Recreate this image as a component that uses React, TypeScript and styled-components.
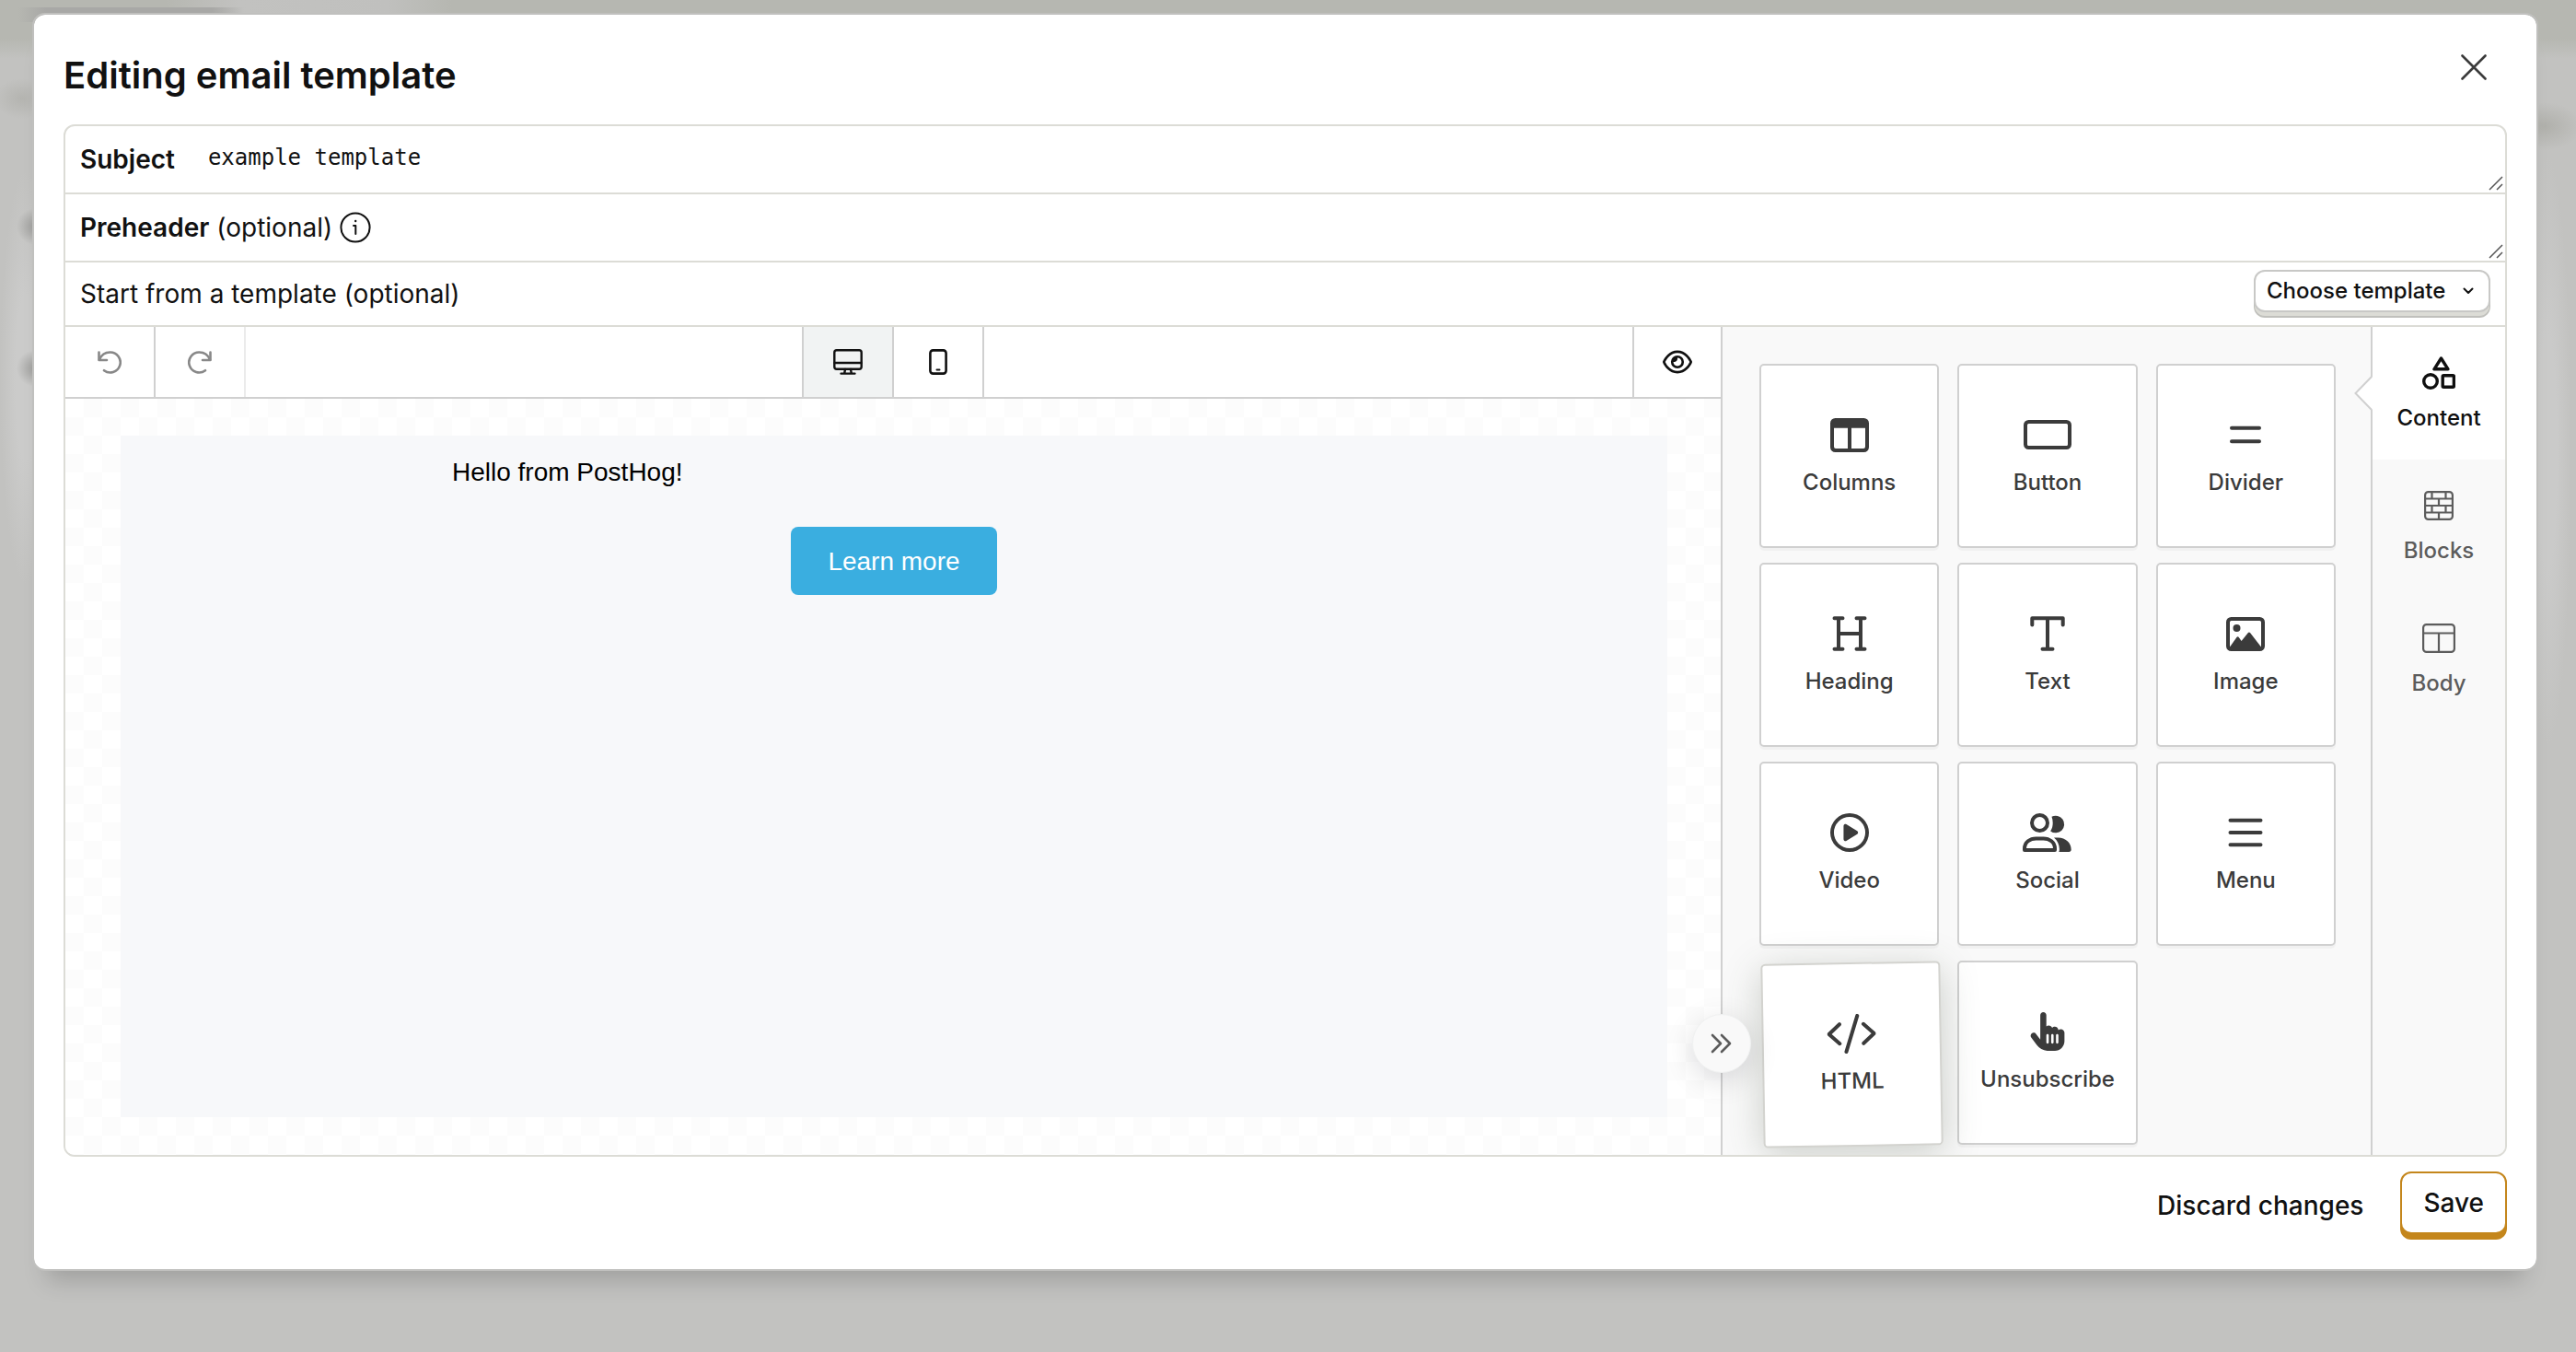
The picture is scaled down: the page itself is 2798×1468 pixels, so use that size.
import React from "react";
import styled, { createGlobalStyle, css } from "styled-components";
import { FaHandPointer, FaRegCirclePlay, FaRegEye } from "react-icons/fa6";

const color = {
  text: "#111111",
  tool: "#3b3b3b",
  muted: "#5c5c5c",
  disabled: "#888888",
  line: "#dcdcd6",
  divider: "#d0d0d0",
  panel: "#f9f9f9",
  email: "#f7f8fa",
  accent: "#c4861c",
  link: "#3aaee0",
};

const Global = createGlobalStyle`
  *, *::before, *::after { box-sizing: border-box; }
  body {
    margin: 0;
    background: #c2c2c0;
    color: ${color.text};
    font-family: Inter, "Liberation Sans", sans-serif;
    font-size: 28px;
    line-height: 40px;
  }
  button, select, textarea { font: inherit; color: inherit; }
`;

/* ---------- page and dialog ---------- */

const Backdrop = styled.div`
  min-height: 100vh;
  padding: 14px 41px 88px 35px;
  background-color: #c2c2c0;
  background-repeat: no-repeat;
  background-image:
    radial-gradient(circle at 38px 246px, #9c9c9a 0, #9c9c9a00 20px),
    radial-gradient(circle at 38px 400px, #9c9c9a 0, #9c9c9a00 20px),
    radial-gradient(ellipse 30px 22px at 24px 107px, #b4b4b0 0, #b4b4b000 100%),
    radial-gradient(ellipse 28px 225px at 28px 410px, #cbcbca 40%, #cbcbca00 100%),
    radial-gradient(ellipse 26px 320px at calc(100% - 31px) 490px, #cacac9 40%, #cacac900 100%),
    radial-gradient(ellipse 40px 26px at calc(100% - 34px) 137px, #b0b0ab 0, #b0b0ab00 100%),
    linear-gradient(90deg, #a8a8a600 20px, #a8a8a6 50px, #a8a8a6 230px, #a8a8a600 265px),
    linear-gradient(180deg, #c2c2c000 65%, #c2c2c0 100%),
    linear-gradient(90deg, #b6b7b1 180px, #c2c2c0 260px, #c0c0be 420px, #b6b7b1 490px);
  background-size: 100% 100%, 100% 100%, 100% 100%, 100% 100%, 100% 100%, 100% 100%, 100% 16px, 100% 64px, 100% 64px;
  background-position: 0 0, 0 0, 0 0, 0 0, 0 0, 0 0, 0 8px, 0 0, 0 0;
`;

const Dialog = styled.main`
  border: 2px solid #c0c0be;
  border-radius: 14px;
  background: #ffffff;
  background-clip: padding-box;
  box-shadow: 0 26px 24px -16px rgba(0, 0, 0, 0.18);
`;

const Header = styled.header`
  display: flex;
  align-items: flex-start;
  justify-content: space-between;
  padding: 33px 44px 20px 32px;
`;

const Title = styled.h1`
  margin: 0;
  font-size: 40px;
  font-weight: 600;
  line-height: 66px;
`;

const PlainButton = styled.button`
  display: flex;
  align-items: center;
  justify-content: center;
  padding: 0;
  border: 0;
  background: transparent;
  cursor: pointer;
`;

const CloseButton = styled(PlainButton)`
  width: 48px;
  height: 48px;
  color: ${color.tool};
`;

const Form = styled.form`
  margin: 0 32px;
  border: 2px solid ${color.line};
  border-radius: 12px;
  overflow: hidden;
`;

/* ---------- form rows ---------- */

const Row = styled.div<{ $compact?: boolean }>`
  position: relative;
  display: flex;
  align-items: center;
  justify-content: space-between;
  gap: 16px;
  height: ${(p) => (p.$compact ? 70 : 74)}px;
  padding-left: 16px;
  padding-right: ${(p) => (p.$compact ? 16 : 0)}px;
  border-bottom: 2px solid ${color.line};
`;

const Label = styled.label`
  display: flex;
  align-items: center;
  gap: 8px;
  white-space: nowrap;
`;

const Strong = styled.strong`
  font-weight: 600;
`;

const Field = styled.textarea`
  flex: 1;
  align-self: stretch;
  display: block;
  padding: 18px 20px;
  border: 0;
  outline: 0;
  resize: none;
  overflow: hidden;
  background: transparent;
  font-family: "DejaVu Sans Mono", monospace;
  font-size: 24px;
  line-height: 32px;
`;

const Grip = styled.svg`
  position: absolute;
  right: 2px;
  bottom: 2px;
  pointer-events: none;
`;

const SelectBox = styled.div`
  display: flex;
  align-items: center;
  width: 257px;
  height: 46px;
  margin-bottom: 6px;
  padding-right: 16px;
  border: 2px solid #c8c8c6;
  border-radius: 12px;
  background: #ffffff;
  box-shadow: 0 5px 0 -1px ${color.line}, 0 6px 0 0 #c0c0bc;
`;

const Select = styled.select`
  flex: 1;
  height: 42px;
  padding: 0 0 0 12px;
  margin-right: -12px;
  appearance: none;
  border: 0;
  outline: 0;
  background: transparent;
  font-size: 24px;
  font-weight: 500;
  line-height: 32px;
`;

/* ---------- editor ---------- */

const Editor = styled.div`
  display: flex;
  align-items: stretch;
`;

const Stage = styled.section`
  flex: 1;
  display: flex;
  flex-direction: column;
`;

const Toolbar = styled.div`
  display: grid;
  grid-template-columns: 1fr auto 1fr;
  height: 78px;
  border-bottom: 2px solid ${color.divider};
`;

const ToolGroup = styled.div<{ $end?: boolean; $line?: boolean }>`
  display: flex;
  justify-content: ${(p) => (p.$end ? "flex-end" : "flex-start")};
  ${(p) => p.$line && css`border-left: 2px solid ${color.divider};`}
`;

const ToolButton = styled(PlainButton)<{ $active?: boolean; $faint?: boolean; $side?: "left" | "right" }>`
  width: ${(p) => (p.$side === "left" ? 96 : 98)}px;
  border-${(p) => p.$side ?? "right"}: 2px solid ${(p) => (p.$faint ? "#ebebeb" : color.divider)};
  background: ${(p) => (p.$active ? "#f1f3f3" : "transparent")};
  &:disabled { color: ${color.disabled}; }
`;

const Canvas = styled.div`
  flex: 1;
  display: flex;
  padding: 40px 58px 41px 60px;
  background: repeating-conic-gradient(#fcfcfc 0 25%, #ffffff 0 50%) 0 0 / 40px 40px;
`;

const Email = styled.article`
  flex: 1;
  background: ${color.email};
  color: #000000;
  font-family: "Liberation Sans", Arial, sans-serif;
  line-height: 39px;
`;

const EmailColumn = styled.div`
  max-width: 1000px;
  margin: 0 auto;
`;

const EmailBlock = styled.div<{ $center?: boolean }>`
  padding: 20px;
  text-align: ${(p) => (p.$center ? "center" : "left")};
`;

const EmailLink = styled.a`
  display: inline-block;
  padding: 18px 40px 17px;
  border-radius: 8px;
  background: ${color.link};
  color: #ffffff;
  text-decoration: none;
`;

const Library = styled.aside`
  position: relative;
  width: 706px;
  padding: 40px 38px 11px 40px;
  border-left: 2px solid ${color.divider};
  background: ${color.panel};
`;

const CardGrid = styled.div`
  display: grid;
  grid-template-columns: repeat(3, 1fr);
  gap: 16px 20px;
`;

const Card = styled(PlainButton)<{ $lifted?: boolean }>`
  flex-direction: column;
  justify-content: flex-start;
  gap: 14px;
  height: 200px;
  padding-top: 53px;
  border: 2px solid ${color.divider};
  border-radius: 5px;
  background: #ffffff;
  box-shadow: 0 3px 0 rgba(0, 0, 0, 0.03);
  color: ${color.tool};
  ${(p) =>
    p.$lifted &&
    css`
      border-color: #d3d3cf;
      transform: translate(3px, 2px) rotate(-1deg);
      box-shadow: 0 8px 40px rgba(70, 80, 60, 0.26);
    `}
`;

const IconSlot = styled.span<{ $size: number }>`
  display: flex;
  align-items: center;
  justify-content: center;
  height: ${(p) => p.$size}px;
`;

const Caption = styled.span`
  font-size: 24px;
  font-weight: 500;
  line-height: 32px;
`;

const Collapse = styled(PlainButton)`
  position: absolute;
  left: -33px;
  bottom: 89px;
  width: 64px;
  height: 64px;
  border: 1px solid #f0f1f1;
  border-radius: 50%;
  background: ${color.panel};
  box-shadow: 0 8px 32px rgba(0, 0, 20, 0.14);
  color: ${color.muted};
`;

const Tabs = styled.nav`
  width: 146px;
  border-left: 2px solid ${color.divider};
  background: ${color.panel};
`;

const Tab = styled(PlainButton)<{ $active?: boolean }>`
  position: relative;
  flex-direction: column;
  justify-content: flex-start;
  gap: 15px;
  width: 100%;
  height: 144px;
  padding-top: 32px;
  background: ${(p) => (p.$active ? "#ffffff" : "transparent")};
  color: ${(p) => (p.$active ? "#0f0f0f" : color.muted)};
`;

const Notch = styled.svg`
  position: absolute;
  top: 53px;
  left: -20px;
`;

/* ---------- footer ---------- */

const Footer = styled.footer`
  display: flex;
  align-items: center;
  justify-content: flex-end;
  gap: 16px;
  padding: 16px 32px 32px;
  font-weight: 500;
`;

const DiscardButton = styled(PlainButton)`
  height: 74px;
  padding: 0 24px;
  font-weight: 500;
`;

const SaveButton = styled(PlainButton)`
  height: 68px;
  margin-bottom: 6px;
  padding: 0 23px;
  border: 2px solid ${color.accent};
  border-radius: 12px;
  background: #ffffff;
  box-shadow: 0 6px 0 ${color.accent};
  font-weight: 500;
`;

/* ---------- icons ---------- */

type StrokeProps = { w: number; h: number; sw?: number; children: React.ReactNode };

const Stroke = ({ w, h, sw = 4, children }: StrokeProps) => (
  <svg
    width={w}
    height={h}
    viewBox={`0 0 ${w} ${h}`}
    fill="none"
    stroke="currentColor"
    strokeWidth={sw}
    strokeLinecap="round"
    strokeLinejoin="round"
    aria-hidden="true"
  >
    {children}
  </svg>
);

const CloseIcon = () => (
  <Stroke w={28} h={28} sw={2.6}>
    <path d="M1.5 1.5l25 25M26.5 1.5l-25 25" />
  </Stroke>
);

const InfoIcon = () => (
  <Stroke w={34} h={34} sw={2}>
    <circle cx="17" cy="17" r="15.6" />
    <path d="M15 15h2.300v9" />
    <circle cx="17.200" cy="10" r="1.200" fill="currentColor" stroke="none" />
  </Stroke>
);

const UndoIcon = () => (
  <Stroke w={26} h={25} sw={2.6}>
    <path d="M1.5 1.5v8.5h8.5" />
    <path d="M2 9.5C4 4.6 8.4 1.5 13.5 1.5A11 11 0 1 1 7 21.2" />
  </Stroke>
);

const RedoIcon = () => (
  <Stroke w={26} h={25} sw={2.6}>
    <path d="M24.5 1.5v8.5H16" />
    <path d="M24 9.5C22 4.6 17.6 1.5 12.5 1.5A11 11 0 1 0 19 21.2" />
  </Stroke>
);

const DesktopIcon = () => (
  <Stroke w={32} h={28} sw={2.4}>
    <rect x="1.3" y="1.3" width="29.4" height="20.4" rx="2.5" />
    <path d="M1.5 15h29M13 22l-.8 4.5M19 22l.8 4.5M8.5 26.6h15" />
  </Stroke>
);

const PhoneIcon = () => (
  <Stroke w={20} h={28} sw={2.6}>
    <rect x="1.4" y="1.4" width="17.2" height="25.2" rx="3" />
    <path d="M8.5 22.6h3" strokeWidth="2" />
  </Stroke>
);

const ColumnsIcon = () => (
  <Stroke w={42} h={37}>
    <path
      d="M5.500 0h31A5.500 5.500 0 0 1 42 5.500v26a5.500 5.500 0 0 1-5.500 5.500h-31A5.500 5.500 0 0 1 0 31.500v-26A5.500 5.500 0 0 1 5.500 0zM4 10.700v20.300a2 2 0 0 0 2 2h13V10.700zM23 10.700V33h13a2 2 0 0 0 2-2V10.700z"
      fill="currentColor"
      fillRule="evenodd"
      stroke="none"
    />
  </Stroke>
);

const ButtonIcon = () => (
  <Stroke w={52} h={32}>
    <rect x="2" y="2" width="48" height="28" rx="3.5" />
  </Stroke>
);

const DividerIcon = () => (
  <Stroke w={34} h={20}>
    <path d="M2 2.7h30M2 17.3h30" />
  </Stroke>
);

const HeadingIcon = () => (
  <Stroke w={38} h={38}>
    <path d="M2.5 2.2h9M26.5 2.2h9M2.5 35.8h9M26.5 35.8h9M7 2.2v33.6M31 2.2v33.6M7 19h24" />
  </Stroke>
);

const TextIcon = () => (
  <Stroke w={38} h={38}>
    <path d="M2.3 9.5V2.2h33.4v7.3M19 2.2v33.6M13.5 35.8h11" />
  </Stroke>
);

const ImageIcon = () => (
  <Stroke w={42} h={37}>
    <rect x="2" y="2" width="38" height="33" rx="3.500" />
    <circle cx="11.500" cy="12" r="4" fill="currentColor" stroke="none" />
    <path d="M4 35v-2.500l7.600-10.700c.500-.700 1.500-.700 2 0l3 4.200 7.300-9c.500-.700 1.600-.700 2.100 0L38 32.500V35z" fill="currentColor" stroke="none" />
  </Stroke>
);

const SocialIcon = () => (
  <Stroke w={53} h={42}>
    <circle cx="18.5" cy="10.5" r="8.5" />
    <path d="M2 38.5C2 31.5 8 27.4 14.5 27.4h8c6.500 0 12.500 4.100 12.500 11.100v1.500H2z" />
    <g fill="currentColor" stroke="none">
      <path d="M31.500 3.800a9.300 9.300 0 1 1-1.300 15.600c1.800-2.700 2.500-5.700 2.500-8.900 0-2.400-.400-4.700-1.200-6.700z" />
      <path d="M34 26.500h4.500c8 0 14.200 5.500 14.200 13 0 1.600-1 2.500-2.500 2.500H39.300c.5-1 .700-2 .600-3.200-.2-5-2.200-9.200-5.900-12.300z" />
    </g>
  </Stroke>
);

const MenuIcon = () => (
  <Stroke w={38} h={32}>
    <path d="M2.500 2.700h33M2.500 16h33M2.500 29.300h33" />
  </Stroke>
);

const CodeIcon = () => (
  <Stroke w={53} h={43}>
    <path d="M13.500 11L2 21.500l11.500 10.500M39.500 11L51 21.500 39.500 32M33 2L20.500 41" />
  </Stroke>
);

const ShapesIcon = () => (
  <Stroke w={36} h={36} sw={3.4}>
    <path d="M20.500 2L13 13.800h15z" />
    <circle cx="9" cy="27" r="7.300" />
    <rect x="22.200" y="20.700" width="12.200" height="12.600" rx="1" />
  </Stroke>
);

const BlocksIcon = () => (
  <Stroke w={32} h={32} sw={2.2}>
    <rect x="1.100" y="1.100" width="29.800" height="29.800" rx="3.500" />
    <path d="M1 8.500h30M1 16h30M1 23.500h30M8.500 1v7.500M23.500 1v7.500M16 8.500V16M8.500 16v7.500M23.500 16v7.500M16 23.500V31" />
  </Stroke>
);

const BodyIcon = () => (
  <Stroke w={36} h={32} sw={2.2}>
    <rect x="1.100" y="1.100" width="33.800" height="29.800" rx="3.500" />
    <path d="M1 10.500h34M18 10.500V31" />
  </Stroke>
);

const CollapseIcon = () => (
  <Stroke w={24} h={22} sw={2.6}>
    <path d="M2 2l9 9-9 9M12 2l9 9-9 9" />
  </Stroke>
);

const ResizeGrip = () => (
  <Grip width="16" height="16" viewBox="0 0 16 16" stroke="#555555" strokeWidth="1.500" aria-hidden="true">
    <path d="M1 15L15 1M9 15l6-6" />
  </Grip>
);

/* ---------- data ---------- */

const tools = [
  { name: "Columns", icon: <ColumnsIcon /> },
  { name: "Button", icon: <ButtonIcon /> },
  { name: "Divider", icon: <DividerIcon /> },
  { name: "Heading", icon: <HeadingIcon /> },
  { name: "Text", icon: <TextIcon /> },
  { name: "Image", icon: <ImageIcon /> },
  { name: "Video", icon: <FaRegCirclePlay size={42} /> },
  { name: "Social", icon: <SocialIcon /> },
  { name: "Menu", icon: <MenuIcon /> },
  { name: "HTML", icon: <CodeIcon />, lifted: true },
  { name: "Unsubscribe", icon: <FaHandPointer size={42} /> },
];

const tabs = [
  { name: "Content", icon: <ShapesIcon /> },
  { name: "Blocks", icon: <BlocksIcon /> },
  { name: "Body", icon: <BodyIcon /> },
];

export default function App() {
  const [subject, setSubject] = React.useState("example template");
  const [preheader, setPreheader] = React.useState("");
  const [device, setDevice] = React.useState<"desktop" | "mobile">("desktop");
  const [tab, setTab] = React.useState("Content");

  return (
    <>
      <Global />
      <Backdrop>
        <Dialog>
          <Header>
            <Title>Editing email template</Title>
            <CloseButton type="button" aria-label="Close">
              <CloseIcon />
            </CloseButton>
          </Header>

          <Form onSubmit={(e) => e.preventDefault()} id="email-template">
            <Row>
              <Label htmlFor="subject">
                <Strong>Subject</Strong>
              </Label>
              <Field id="subject" rows={1} value={subject} onChange={(e) => setSubject(e.target.value)} />
              <ResizeGrip />
            </Row>
            <Row>
              <Label htmlFor="preheader">
                <Strong>Preheader</Strong>
                <span>(optional)</span>
                <InfoIcon />
              </Label>
              <Field id="preheader" rows={1} value={preheader} onChange={(e) => setPreheader(e.target.value)} />
              <ResizeGrip />
            </Row>
            <Row $compact>
              <Label htmlFor="template">Start from a template (optional)</Label>
              <SelectBox>
                <Select id="template">
                  <option>Choose template</option>
                </Select>
                <Stroke w={12} h={8} sw={2}>
                  <path d="M1.500 1.500L6 6l4.500-4.500" />
                </Stroke>
              </SelectBox>
            </Row>

            <Editor>
              <Stage>
                <Toolbar>
                  <ToolGroup>
                    <ToolButton type="button" disabled aria-label="Undo">
                      <UndoIcon />
                    </ToolButton>
                    <ToolButton type="button" disabled $faint aria-label="Redo">
                      <RedoIcon />
                    </ToolButton>
                  </ToolGroup>
                  <ToolGroup $line>
                    <ToolButton
                      type="button"
                      $active={device === "desktop"}
                      onClick={() => setDevice("desktop")}
                      aria-label="Desktop"
                    >
                      <DesktopIcon />
                    </ToolButton>
                    <ToolButton
                      type="button"
                      $active={device === "mobile"}
                      onClick={() => setDevice("mobile")}
                      aria-label="Mobile"
                    >
                      <PhoneIcon />
                    </ToolButton>
                  </ToolGroup>
                  <ToolGroup $end>
                    <ToolButton type="button" $side="left" aria-label="Preview">
                      <FaRegEye size={32} />
                    </ToolButton>
                  </ToolGroup>
                </Toolbar>
                <Canvas>
                  <Email>
                    <EmailColumn>
                      <EmailBlock>Hello from PostHog!</EmailBlock>
                      <EmailBlock $center>
                        <EmailLink href="#learn-more">Learn more</EmailLink>
                      </EmailBlock>
                    </EmailColumn>
                  </Email>
                </Canvas>
              </Stage>

              <Library>
                <CardGrid>
                  {tools.map((t) => (
                    <Card type="button" key={t.name} $lifted={t.lifted}>
                      <IconSlot $size={44}>{t.icon}</IconSlot>
                      <Caption>{t.name}</Caption>
                    </Card>
                  ))}
                </CardGrid>
                <Collapse type="button" aria-label="Collapse panel">
                  <CollapseIcon />
                </Collapse>
              </Library>

              <Tabs>
                {tabs.map((t) => (
                  <Tab type="button" key={t.name} $active={t.name === tab} onClick={() => setTab(t.name)}>
                    {t.name === tab && (
                      <Notch width="20" height="38" viewBox="0 0 20 38" aria-hidden="true">
                        <path d="M20 1L1.500 19 20 37z" fill="#ffffff" />
                        <path d="M19 1L1.500 19 19 37" fill="none" stroke={color.divider} strokeWidth="2" />
                      </Notch>
                    )}
                    <IconSlot $size={36}>{t.icon}</IconSlot>
                    <Caption>{t.name}</Caption>
                  </Tab>
                ))}
              </Tabs>
            </Editor>
          </Form>

          <Footer>
            <DiscardButton type="button">Discard changes</DiscardButton>
            <SaveButton type="submit" form="email-template">
              Save
            </SaveButton>
          </Footer>
        </Dialog>
      </Backdrop>
    </>
  );
}
